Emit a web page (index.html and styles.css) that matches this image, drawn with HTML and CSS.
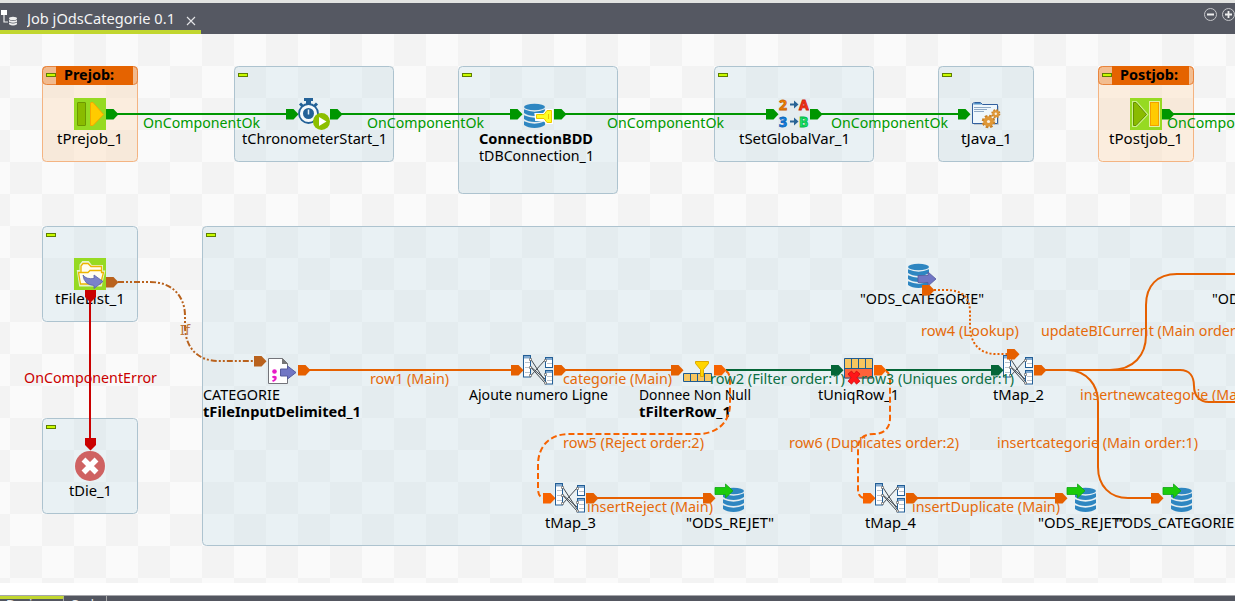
FILE: index.html
```
<!DOCTYPE html>
<html lang="en">
<head>
<meta charset="utf-8">
<title>Job jOdsCategorie 0.1</title>
<link rel="stylesheet" href="styles.css">
</head>
<body>
<div class="app">
<header class="tabbar">
  <div class="tab">
    <svg class="tab-icon" width="18" height="18" viewBox="0 0 18 18"><rect x="1" y="1" width="6" height="5" fill="#fff"/><path d="M4 6V13H8" fill="none" stroke="#eee" stroke-width="1.2"/><ellipse cx="13" cy="9.5" rx="4" ry="1.8" fill="#eee"/><path d="M9 11q4 2 8 0v1.700q-4 2-8 0zM9 13.500q4 2 8 0v1.700q-4 2.500-8 0z" fill="#eee"/></svg>
    <svg class="tab-label" width="150" height="24"><text class="tab-text" x="0" y="17" textLength="148" lengthAdjust="spacingAndGlyphs">Job jOdsCategorie 0.1</text></svg>
    <svg class="close" width="10" height="10"><path d="M1 1L9 9M9 1L1 9" stroke="#e4e5e7" stroke-width="1.1"/></svg>
  </div>
  <svg class="zoomers" width="32" height="16"><g fill="none" stroke="#c5c6ca" stroke-width="1"><circle cx="7.5" cy="7.5" r="6"/><circle cx="25.5" cy="7.5" r="6"/><path d="M4 7.5h7M22 7.5h7M25.5 4v7" stroke="#eee" stroke-width="1.8"/></g></svg>
</header>
<main class="canvas">
<svg class="diagram" width="1235" height="549" viewBox="0 34 1235 549">
<defs>
  <pattern id="tiles" x="10" y="34" width="64" height="64" patternUnits="userSpaceOnUse"><rect width="64" height="64" fill="#fafafa"/><path d="M0 0h32v32H0zM32 32h32v32H32z" fill="#f3f3f3"/></pattern>
  <path id="port" d="M0-5H7.5L12.500 .2L7.5 5.5H0Z"/>
  <g id="fold"><rect x=".5" y=".5" width="9" height="3" fill="#c8fa00" stroke="#5f7f00"/></g>
  <g id="db" fill="#2e86c1">
    <ellipse cx="10.5" cy="3" rx="10.5" ry="3.2"/>
    <path id="disc" d="M0 5.3Q10.5 10 21 5.3V9Q17 12 10.5 12T0 9Z"/>
    <use href="#disc" y="6"/><use href="#disc" y="12"/>
  </g>
  <path id="insert" d="M0 3.5H10.5V0L18 6.8L10.5 14V10.5H0Z" fill="#1bcb0b" stroke="#0fa414" stroke-width=".8"/>
  <path id="extract" d="M0 3.5H10V0L18 7L10 14V10.5H0Z" fill="#7076c4" stroke="#555a9d" stroke-width=".8"/>
  <g id="map">
    <path d="M8 4.500L22 26M8 12L22 24M8 20.500L22 5M8 12.500L22 28" fill="none" stroke="#444a50" stroke-width="1"/>
    <g fill="#fff" stroke="#235f97"><rect x=".5" y=".5" width="7" height="21.500"/><rect x="22.500" y="2.500" width="7" height="10"/><rect x="22.500" y="15.500" width="7" height="13.500"/></g>
    <path d="M1 1H7V3.500H1ZM23 3H29V5H23ZM23 16H29V18H23Z" fill="#82a9cf"/>
    <path d="M2 7.500H7M2 12.500H7M2 17.500H7M24 8.500H29M24 21.500H29M24 25.500H29" stroke="#b9c2cb"/>
    <path d="M6.500 3.500h2v2h-2zM6.500 11.500h2v2h-2zM6.500 19.500h2v2h-2zM21.500 4.500h2v2h-2zM21.500 18.500h2v2h-2zM21.500 27h2v2h-2z" fill="#fff" stroke="#666" stroke-width=".7"/>
  </g>
</defs>
<rect y="34" width="1235" height="549" fill="url(#tiles)"/>

<g class="box">
  <rect x="234.500" y="66.500" width="159" height="95" rx="4"/><rect x="458.500" y="66.500" width="159" height="127" rx="4"/>
  <rect x="714.500" y="66.500" width="159" height="95" rx="4"/><rect x="938.500" y="66.500" width="95" height="95" rx="4"/>
  <rect x="42.500" y="226.500" width="95" height="95" rx="4"/><rect x="42.500" y="418.500" width="95" height="95" rx="4"/>
  <rect x="202.500" y="226.500" width="1100" height="319" rx="4"/>
</g>
<g class="subjob"><rect x="42.500" y="66.500" width="95" height="95" rx="4"/><rect x="1098.500" y="66.500" width="95" height="95" rx="4"/></g>
<g class="cap"><rect x="42.500" y="66.500" width="95" height="18" rx="4"/><rect x="1098.500" y="66.500" width="95" height="18" rx="4"/></g>
<path d="M56 66h77v19H56zM1112 66h77v19h-77z" fill="#e56300"/>
<use href="#fold" x="46" y="73"/><use href="#fold" x="1102" y="73"/><use href="#fold" x="238" y="73"/><use href="#fold" x="462" y="73"/><use href="#fold" x="718" y="73"/><use href="#fold" x="942" y="73"/><use href="#fold" x="46" y="233"/><use href="#fold" x="206" y="233"/><use href="#fold" x="46" y="425"/>

<!-- Component icons -->
<g><path d="M74 98h32v32H74z" fill="#96da22"/><rect x="77.500" y="102.500" width="8" height="23" rx=".5" fill="#8abb00" stroke="#6d9800"/><path d="M90.500 103V125.500H93L103.500 114.500L93 102.500H91Z" fill="#ffcb00" stroke="#f5a800"/></g>
<g><path d="M1130 98h32v32h-32z" fill="#96da22"/><path d="M1133.500 102.500V125.500H1136L1146.500 114.500L1136 102.500Z" fill="none" stroke="#cdf08c" stroke-width="3"/><path d="M1133.500 102.500V125.500H1136L1146.500 114.500L1136 102.500Z" fill="#8abb00" stroke="#658f00"/><rect x="1150.500" y="102.500" width="8" height="23" fill="none" stroke="#e3f3a0" stroke-width="3"/><rect x="1150.500" y="102.500" width="8" height="23" fill="#ffcb00" stroke="#f3a000"/></g>
<g><path d="M304 98h9v3h-2v3h-5v-3h-2z" fill="#246298"/><path d="M300 103.500l4 4M317 103.500l-4 4" stroke="#246298" stroke-width="3"/><circle cx="308.500" cy="113.500" r="9.500" fill="#f6fafc" stroke="#246298" stroke-width="1.800"/><circle cx="308.500" cy="113.500" r="5.500" fill="#246298"/><path d="M308.500 109.500v5" stroke="#e0edf5" stroke-width="1.500"/><circle cx="321.500" cy="121.500" r="8.500" fill="#8cbf00"/><path d="M319 117V126L326.500 121.500Z" fill="#fff"/></g>
<g><use href="#db" x="524" y="104"/><path d="M536 114.500H544L547 110.500H551.500V122.500H547L544 119.500H536.500Z" fill="#ffff22" stroke="#fff" stroke-width="3"/><path d="M536.500 114.500H544L547 110.500H551.500V122.500H547L544 118.500H536.500Z" fill="#ffff22" stroke="#edc600"/><path d="M548.500 114v5" stroke="#edc600"/></g>
<g class="glyph"><text x="779" y="110" fill="#f58500" stroke="#c76000">2</text><text x="799" y="110" fill="#fa3415" stroke="#cf1d08">A</text><text x="779" y="127" fill="#1689e8" stroke="#0760b5">3</text><text x="799" y="127" fill="#16eb68" stroke="#05b544">B</text></g><path d="M790 103.500h4v-3l4.500 4-4.500 4v-3h-4zM790 120.500h4v-3l4.500 4-4.500 4v-3h-4z" fill="#286395"/>
<g><path d="M998.500 106v18.500H974" fill="none" stroke="#c0c8cd"/><path d="M972.500 123.500V103.500l2-1h6l2 2H997.500V123.500Z" fill="#eff7fc" stroke="#315f9e"/><path d="M973 104.500h9l-1.500-1.500h-6z" fill="#4d8fc5"/><path d="M974 107.500h17M974 109.500h13M974 111.500h10" stroke="#7795b8" stroke-width=".8"/><g fill="#df9736"><circle cx="988.500" cy="121.500" r="5" stroke="#c98126" stroke-width="3.500" stroke-dasharray="2.300 1.627"/><circle cx="988.500" cy="121.500" r="5"/><circle cx="995.800" cy="113.700" r="3.300" stroke="#c98126" stroke-width="2.500" stroke-dasharray="1.600 .990"/><circle cx="995.800" cy="113.700" r="3.200"/><circle cx="988.500" cy="121.500" r="1.600" fill="#f6eee2"/><circle cx="995.800" cy="113.700" r="1.200" fill="#f6eee2"/></g></g>
<g><path d="M74 258h32v32H74z" fill="#96da22"/><path d="M80.500 285L78.500 271.500H81V265L83 262.500H88L91 266.500H101.500V272H103.500L100.500 285Z" fill="#fffdf0" stroke="#e8f4d0" stroke-width="3"/><path d="M80.500 284L78.500 272.500H81V266L83 263.500H88L91 266.500H101.500V272.500H103.500L100.500 284ZM81 272.500H88L90 270.500H101" fill="#fffdf0" stroke="#edb500" stroke-width="1.300"/><path d="M83 275Q86 279.500 94 278.500V275L103 281.500L94 288.500V285.500Q84 285 83 275Z" fill="#7a82c9" stroke="#5962aa" stroke-width=".8"/></g>
<circle cx="90" cy="466" r="15" fill="#cf6262"/><path d="M83.500 459.500l13 13M96.500 459.500l-13 13" stroke="#fff" stroke-width="5.500"/>
<g><path d="M268.500 358.500h14l5 5v20h-19z" fill="#fff" stroke="#73747a"/><path d="M282 358l6 6h-6z" fill="#777"/><circle cx="274.500" cy="371.500" r="2.300" fill="#e81cc6"/><path d="M272 376.500q2-1.500 4.500 0q1.200 3.500-3.500 5.500l-1-1.500q2.500-.8 2.500-2q-2.500 0-2.500-2z" fill="#e81cc6"/><path d="M280.500 369H287.500V366L296 372.500L287.500 379V376H280.500Z" fill="#7076c4" stroke="#555a9d"/></g>
<use href="#map" x="523" y="355"/><use href="#map" x="555" y="483"/><use href="#map" x="875" y="483"/><use href="#map" x="1003" y="355"/>
<g><path d="M683.500 373.500h28v8h-28zM690.500 373.500v8M697.500 373.500v8M704.500 373.500v8" fill="#f8c65f" stroke="#205b90"/><path d="M695.500 361.500h13v2l-5 6v7h-3v-7l-5-6z" fill="#ffd500" stroke="#dda800"/></g>
<g><path d="M844.500 358.500h28v10h-28z" fill="#f8c65f"/><path d="M844.500 368.500h28v10h-28z" fill="#ff6239"/><path d="M844.500 358.500h28v19.500h-28zM844.500 368.500h28M851.500 358.500v10M858.500 358.500v10M865.500 358.500v10" fill="none" stroke="#205b90"/><path d="M848 374l3.500-3 2.500 3 2.500-3 3.500 3-3 3.700 3 3.500-3.500 3-2.500-3-2.500 3-3.500-3 3-3.500z" fill="#ff1519" stroke="#c90708" stroke-width=".7"/></g>
<use href="#db" x="908" y="264"/><use href="#extract" x="918" y="272"/>
<use href="#db" x="723" y="488"/><use href="#insert" x="715" y="484"/><use href="#db" x="1075" y="488"/><use href="#insert" x="1067" y="484"/><use href="#db" x="1171" y="488"/><use href="#insert" x="1163" y="484"/>

<!-- Component names -->
<g class="name">
<text class="bold" x="64" y="80" textLength="50" lengthAdjust="spacingAndGlyphs">Prejob:</text><text class="bold" x="1120" y="80" textLength="58" lengthAdjust="spacingAndGlyphs">Postjob:</text>
<text x="57" y="144" textLength="66" lengthAdjust="spacingAndGlyphs">tPrejob_1</text><text x="242" y="144" textLength="145" lengthAdjust="spacingAndGlyphs">tChronometerStart_1</text>
<text class="bold" x="479" y="144" textLength="114" lengthAdjust="spacingAndGlyphs">ConnectionBDD</text><text x="479" y="161" textLength="115" lengthAdjust="spacingAndGlyphs">tDBConnection_1</text>
<text x="739" y="144" textLength="111" lengthAdjust="spacingAndGlyphs">tSetGlobalVar_1</text><text x="961" y="144" textLength="51" lengthAdjust="spacingAndGlyphs">tJava_1</text><text x="1109" y="144" textLength="74" lengthAdjust="spacingAndGlyphs">tPostjob_1</text>
<text x="55" y="304" textLength="70" lengthAdjust="spacingAndGlyphs">tFileList_1</text><text x="69" y="496" textLength="43" lengthAdjust="spacingAndGlyphs">tDie_1</text>
<text x="203" y="400" textLength="77" lengthAdjust="spacingAndGlyphs">CATEGORIE</text><text class="bold" x="203" y="417" textLength="158" lengthAdjust="spacingAndGlyphs">tFileInputDelimited_1</text>
<text x="469" y="400" textLength="139" lengthAdjust="spacingAndGlyphs">Ajoute numero Ligne</text><text x="639" y="400" textLength="112" lengthAdjust="spacingAndGlyphs">Donnee Non Null</text><text class="bold" x="639" y="417" textLength="92" lengthAdjust="spacingAndGlyphs">tFilterRow_1</text>
<text x="818" y="400" textLength="81" lengthAdjust="spacingAndGlyphs">tUniqRow_1</text><text x="993" y="400" textLength="51" lengthAdjust="spacingAndGlyphs">tMap_2</text><text x="545" y="528" textLength="51" lengthAdjust="spacingAndGlyphs">tMap_3</text><text x="865" y="528" textLength="51" lengthAdjust="spacingAndGlyphs">tMap_4</text>
<text x="686" y="528" textLength="88" lengthAdjust="spacingAndGlyphs">"ODS_REJET"</text><text x="1038" y="528" textLength="88" lengthAdjust="spacingAndGlyphs">"ODS_REJET"</text><text x="1116" y="528" textLength="124" lengthAdjust="spacingAndGlyphs">"ODS_CATEGORIE"</text>
<text x="860" y="304" textLength="124" lengthAdjust="spacingAndGlyphs">"ODS_CATEGORIE"</text><text x="1212" y="304" textLength="124" lengthAdjust="spacingAndGlyphs">"ODS_CATEGORIE"</text>
</g>

<!-- Connections -->
<g class="link green"><path d="M117 114H288M341 114H512M565 114H768M821 114H960M1173 114H1235"/></g>
<g fill="#009600"><use href="#port" x="106" y="114"/><use href="#port" x="286" y="114"/><use href="#port" x="330" y="114"/><use href="#port" x="510" y="114"/><use href="#port" x="554" y="114"/><use href="#port" x="766" y="114"/><use href="#port" x="810" y="114"/><use href="#port" x="958" y="114"/><use href="#port" x="1162" y="114"/></g>
<g class="link red"><path d="M90 300V440"/></g><path d="M85 290h11v7l-5.500 5.500-5.500-5.500zM85 438h11v7l-5.500 5.500-5.500-5.500z" fill="#ca0000"/>
<g class="link brown"><path d="M118 282H150C172 282 185 296 185 316V326C185 347 197 361 219 361H254"/></g><g fill="#b9621d"><use href="#port" x="106" y="282"/><use href="#port" x="254" y="361"/></g>
<g class="link dark"><path d="M726 370H833M886 370H993"/></g><g fill="#056638"><use href="#port" x="831" y="370"/><use href="#port" x="991" y="370"/></g>
<g class="link orange">
<path d="M309 370H512M565 370H673M597 498H705M917 498H1057M1045 370H1180C1190 370 1194 377 1194 386S1199 402 1209 402H1235"/>
<path d="M1110 370C1134 370 1146 355 1146 335V305C1146 286 1157 274 1177 274H1235M1068 370C1087 371 1098 385 1098 402V467C1098 486 1110 498 1128 498H1152"/>
<path class="dash" d="M726 371Q730 373 730 381V404C730 423 716 434 698 434H569C550 434 538 446 538 465V489Q538 498 545 498M886 371Q890 373 890 381V418C890 430 882 434 874 434S858 437 858 448V489Q858 498 865 498"/>
<path class="dots" d="M934 290H946C963 290 970 298 970 312V325C970 344 980 354 996 354H1008"/>
</g>
<g fill="#e66000"><use href="#port" x="298" y="370"/><use href="#port" x="511" y="370"/><use href="#port" x="554" y="370"/><use href="#port" x="671" y="370"/><use href="#port" x="586" y="498"/><use href="#port" x="703" y="498"/><use href="#port" x="906" y="498"/><use href="#port" x="1055" y="498"/><use href="#port" x="1151" y="498"/><use href="#port" x="1034" y="370"/><use href="#port" x="922" y="290"/><use href="#port" x="1007" y="354"/></g>
<g fill="#f76300"><use href="#port" x="714" y="370"/><use href="#port" x="874" y="370"/><use href="#port" x="543" y="498"/><use href="#port" x="863" y="498"/></g>

<!-- Connection labels -->
<g class="name" fill="#009900"><text x="143" y="128" textLength="117" lengthAdjust="spacingAndGlyphs">OnComponentOk</text><text x="367" y="128" textLength="117" lengthAdjust="spacingAndGlyphs">OnComponentOk</text><text x="607" y="128" textLength="117" lengthAdjust="spacingAndGlyphs">OnComponentOk</text><text x="831" y="128" textLength="117" lengthAdjust="spacingAndGlyphs">OnComponentOk</text><text x="1167" y="128" textLength="117" lengthAdjust="spacingAndGlyphs">OnComponentOk</text></g>
<g class="name" fill="#ca0000"><text x="24" y="383" textLength="133" lengthAdjust="spacingAndGlyphs">OnComponentError</text></g>
<g class="name" fill="#bd783d"><text x="180" y="335" textLength="10" lengthAdjust="spacingAndGlyphs">If</text></g>
<g class="name" fill="#0d7046"><text x="710" y="384" textLength="135" lengthAdjust="spacingAndGlyphs">row2 (Filter order:1)</text><text x="861" y="384" textLength="153" lengthAdjust="spacingAndGlyphs">row3 (Uniques order:1)</text></g>
<g class="name" fill="#e56a0a"><text x="370" y="384" textLength="79" lengthAdjust="spacingAndGlyphs">row1 (Main)</text><text x="563" y="384" textLength="109" lengthAdjust="spacingAndGlyphs">categorie (Main)</text><text x="563" y="448" textLength="141" lengthAdjust="spacingAndGlyphs">row5 (Reject order:2)</text><text x="789" y="448" textLength="170" lengthAdjust="spacingAndGlyphs">row6 (Duplicates order:2)</text><text x="587" y="512" textLength="126" lengthAdjust="spacingAndGlyphs">insertReject (Main)</text><text x="912" y="512" textLength="148" lengthAdjust="spacingAndGlyphs">insertDuplicate (Main)</text><text x="921" y="336" textLength="98" lengthAdjust="spacingAndGlyphs">row4 (Lookup)</text><text x="1041" y="336" textLength="211" lengthAdjust="spacingAndGlyphs">updateBICurrent (Main order:3)</text><text x="1080" y="400" textLength="226" lengthAdjust="spacingAndGlyphs">insertnewcategorie (Main order:2)</text><text x="997" y="448" textLength="201" lengthAdjust="spacingAndGlyphs">insertcategorie (Main order:1)</text></g>
</svg>
</main>
<footer class="views"><span class="view active">Designer</span><span class="view">Code</span></footer>
</div>
</body>
</html>
```

FILE: styles.css
```
body { margin: 0; background: #fff; font-family: "Noto Sans", "Open Sans", sans-serif; }
.app { display: flex; flex-direction: column; width: 1235px; height: 601px; overflow: hidden; }
.tabbar { box-sizing: border-box; flex: 0 0 34px; display: flex; justify-content: space-between; border-top: 3px solid #e2e3e1; background: #555862; }
.tab { box-sizing: border-box; width: 201px; height: 31px; display: flex; align-items: flex-start; border-bottom: 4px solid #c1d62f; padding-top: 4px; }
.tab-icon { flex: none; margin-top: 2px; }
.tab-label { flex: none; margin-left: 9px; }
.tab-text { fill: #f4f4f5; font-size: 14px; }
.close { flex: none; margin: 9px 0 0 9px; }
.zoomers { margin: 4px 0 0; }
.canvas { flex: 0 0 561px; background: #fff; }
.diagram { display: block; }
.box { fill: rgba(202, 224, 234, .36); stroke: #adc3cf; }
.subjob { fill: rgba(255, 211, 167, .33); stroke: #f4b482; }
.cap { fill: rgba(229, 99, 0, .35); stroke: #e9843c; }
.name { font-size: 14px; }
.bold { font-weight: 700; }
.glyph { font-size: 14px; font-weight: 700; stroke-width: .8px; }
.link { fill: none; stroke-width: 2px; }
.green { stroke: #009600; }
.red { stroke: #ca0000; }
.brown { stroke: #b9621d; stroke-dasharray: 6 2 2 2 2 2; }
.dark { stroke: #056638; }
.orange { stroke: #e66000; }
.dash { stroke: #f76300; stroke-dasharray: 6 3; }
.dots { stroke-dasharray: 2 2; }
.views { box-sizing: border-box; height: 6px; flex: none; display: flex; overflow: hidden; border-top: 1px solid #a5a6ab; background: #535660; color: #e9e9eb; font-size: 13px; line-height: 16px; }
.view { box-sizing: border-box; width: 43px; height: 24px; padding: 0 0 0 6px; border-right: 1px solid #aaa; }
.view.active { width: 64px; margin-top: -1px; padding: 0 0 0 6px; border-top: 4px solid #c1d62f; line-height: 10px; }
```
